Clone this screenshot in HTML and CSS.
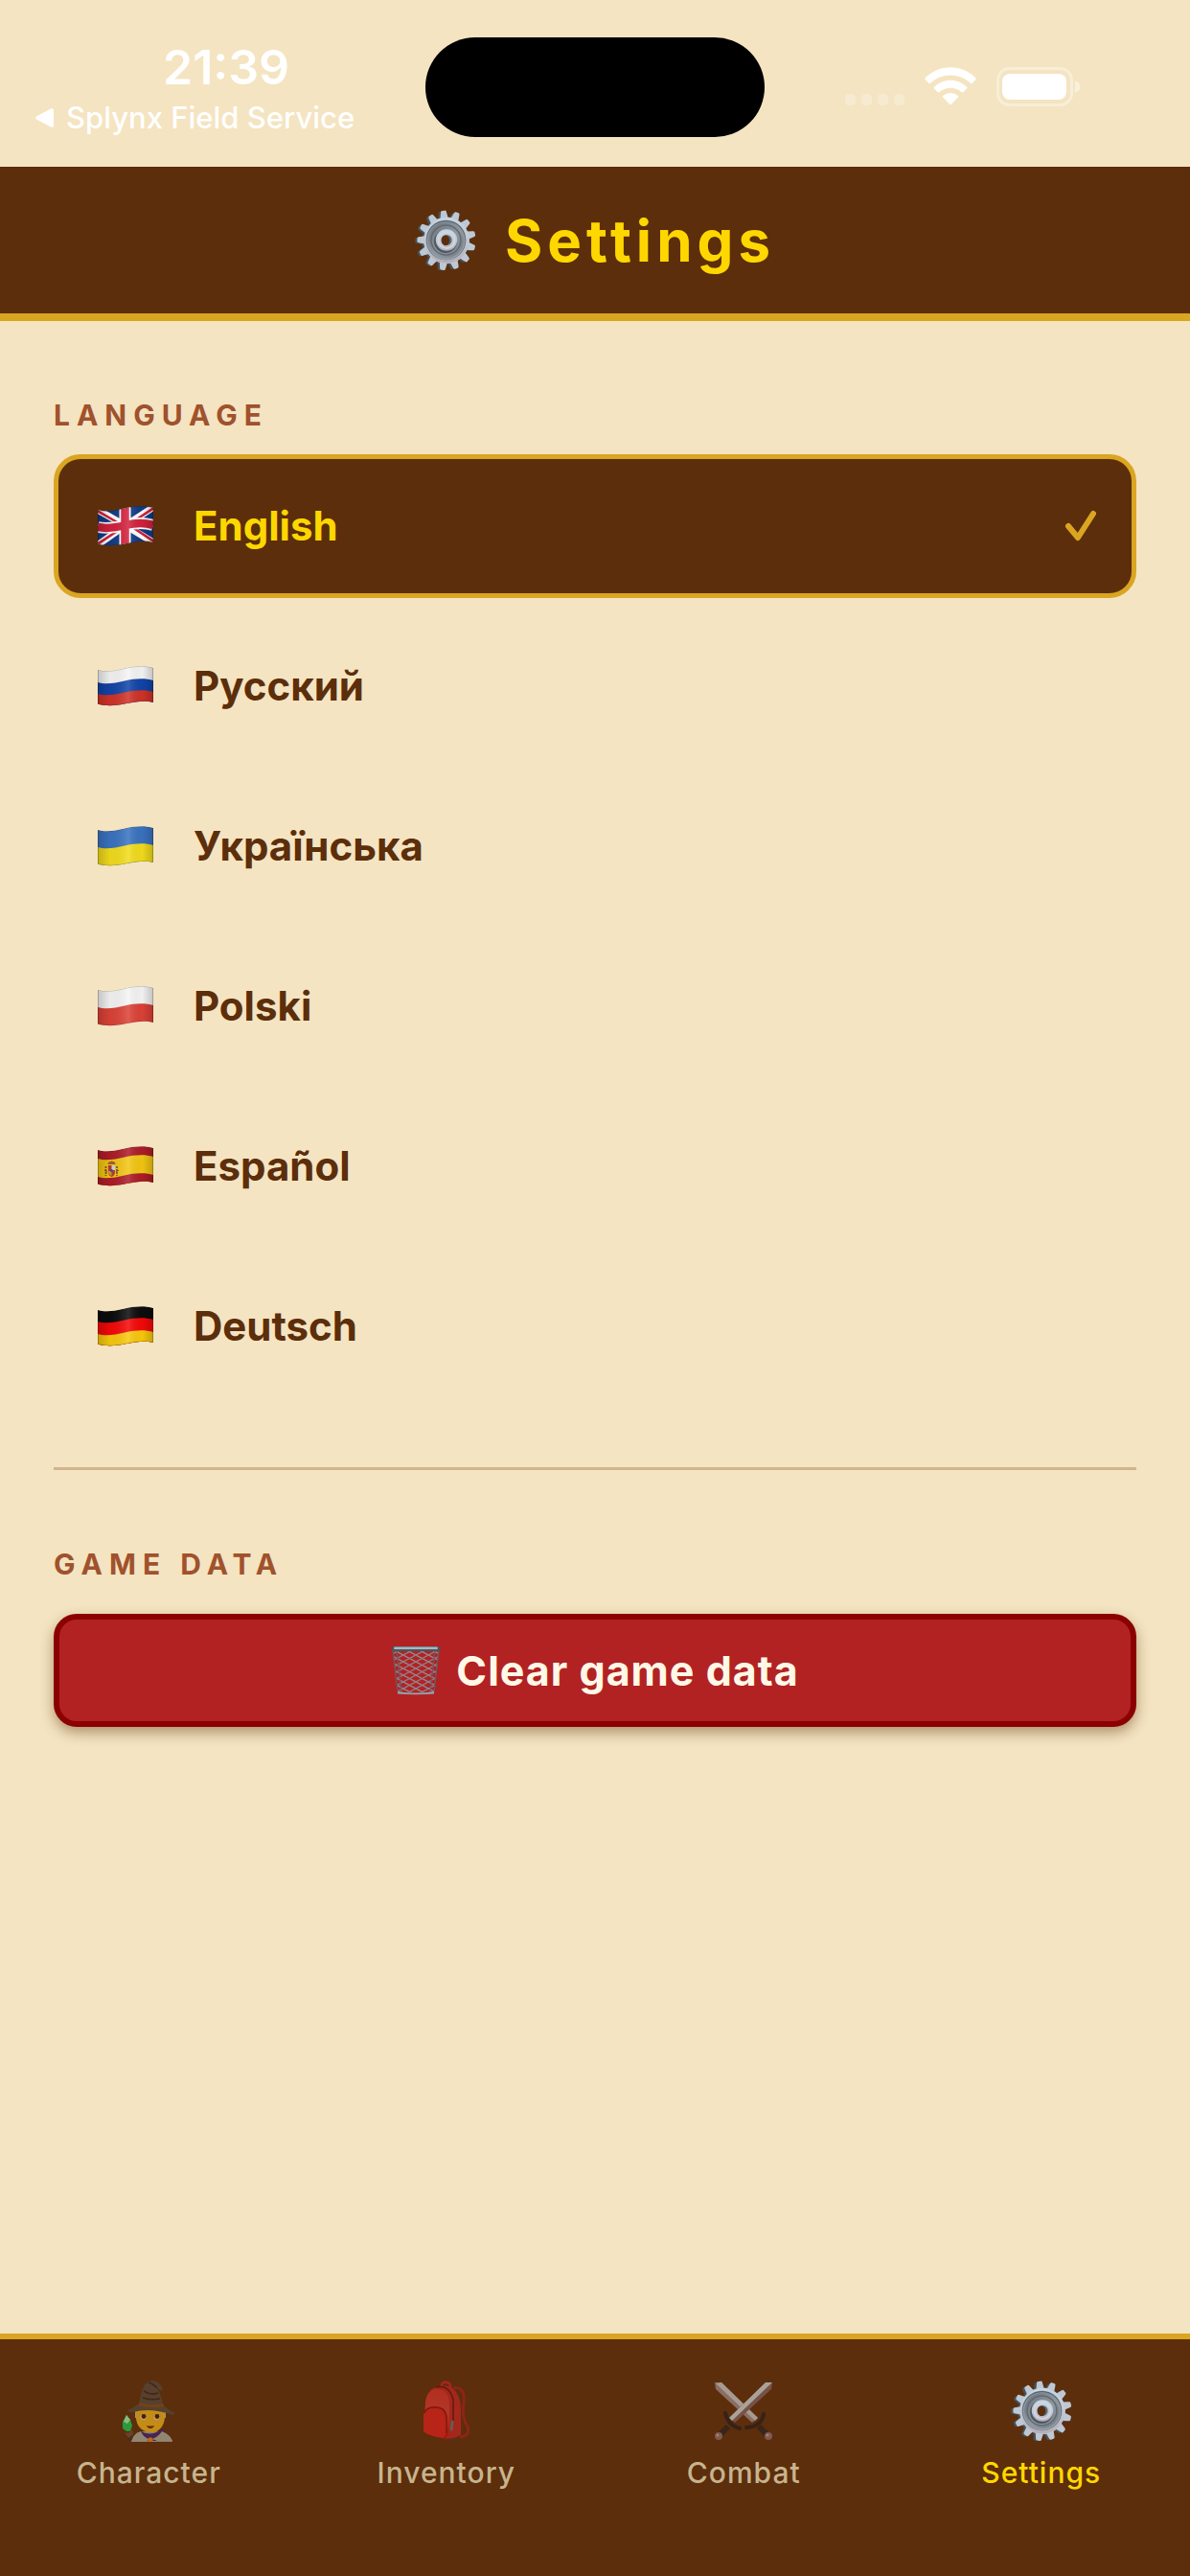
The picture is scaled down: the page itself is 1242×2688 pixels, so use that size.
FILE: index.html
```html
<!DOCTYPE html>
<html lang="en">
<head>
<meta charset="utf-8">
<meta name="viewport" content="width=device-width, initial-scale=1">
<title>Settings</title>
<link rel="stylesheet" href="styles.css">
</head>
<body>
<svg class="defs" width="0" height="0" aria-hidden="true">
  <defs>
    <linearGradient id="shade" x1="0" x2="1" y1="0" y2="0">
      <stop offset="0" stop-color="#000" stop-opacity=".2"/>
      <stop offset=".22" stop-color="#000" stop-opacity=".04"/>
      <stop offset=".55" stop-color="#fff" stop-opacity=".14"/>
      <stop offset=".8" stop-color="#000" stop-opacity=".02"/>
      <stop offset="1" stop-color="#000" stop-opacity=".2"/>
    </linearGradient>
    <clipPath id="flag-clip"><path d="M0 4C8 6.500 18 5 28 2.500C38 0 50-.5 58 2V38C50 35.500 40 37 30 39C20 41.500 8 42 0 39.500Z"/></clipPath>
    <path id="wave" d="M0 4C8 6.500 18 5 28 2.500C38 0 50-.5 58 2V60H0Z"/>
    <g id="flag-finish">
      <rect width="58" height="42" fill="url(#shade)"/>
      <path d="M.5 4C8 6.500 18 5 28 2.500C38 0 50-.5 57.500 2V38C50 35.500 40 37 30 39C20 41.500 8 42 .5 39.500Z" fill="none" stroke="#000" stroke-opacity=".2"/>
    </g>
    <linearGradient id="steel" x1="0" x2="0" y1="0" y2="1">
      <stop offset="0" stop-color="#c5d6e2"/><stop offset=".6" stop-color="#c0c6d0"/><stop offset="1" stop-color="#b7adb8"/>
    </linearGradient>
    <linearGradient id="groove" x1="0" x2="1" y1="0" y2="1">
      <stop offset="0" stop-color="#69727a"/><stop offset=".55" stop-color="#8d979f"/><stop offset="1" stop-color="#737c86"/>
    </linearGradient>
    <path id="tooth" d="M-4.500-22L-3-30Q-2.800-31.500-1.500-31.500H1.500Q2.800-31.500 3-30L4.500-22Z"/>
    <g id="cog">
      <circle r="24.500"/>
      <use href="#tooth" transform="rotate(-6)"/><use href="#tooth" transform="rotate(21.700)"/>
      <use href="#tooth" transform="rotate(49.400)"/><use href="#tooth" transform="rotate(77.100)"/>
      <use href="#tooth" transform="rotate(104.800)"/><use href="#tooth" transform="rotate(132.500)"/>
      <use href="#tooth" transform="rotate(160.200)"/><use href="#tooth" transform="rotate(187.900)"/>
      <use href="#tooth" transform="rotate(215.600)"/><use href="#tooth" transform="rotate(243.300)"/>
      <use href="#tooth" transform="rotate(271)"/><use href="#tooth" transform="rotate(298.700)"/>
      <use href="#tooth" transform="rotate(326.400)"/>
    </g>
    <symbol id="gear" viewBox="0 0 64 64">
      <use href="#cog" transform="translate(30.500 32.500) scale(.96 .98)" fill="#47535b"/>
      <use href="#cog" transform="translate(33 31.800) scale(.97 .99)" fill="#bdc8d4"/>
      <circle cx="33" cy="31.800" r="23.700" fill="url(#steel)"/>
      <circle cx="32.500" cy="31.500" r="20.800" fill="#5e666f"/>
      <circle cx="32.500" cy="32.200" r="20" fill="#929ca4"/>
      <circle cx="32.500" cy="31.500" r="18.600" fill="url(#groove)"/>
      <circle cx="32.500" cy="31.500" r="15.500" fill="none" stroke="#626970" stroke-width="1.500"/>
      <circle cx="32" cy="33" r="12" fill="#4f575f"/>
      <circle cx="33" cy="31.500" r="11.200" fill="url(#steel)"/>
      <circle cx="33" cy="31.500" r="8.500" fill="none" stroke="#ced6e0" stroke-width="2"/>
      <circle cx="33" cy="31.500" r="5.600" fill="#566b79"/>
      <ellipse cx="32" cy="31.800" rx="4.200" ry="5.400" fill="#5c2e0b"/>
    </symbol>
  </defs>
</svg>

<div class="screen">
  <div class="status">
    <div class="status-left">
      <time class="clock">21:39</time>
      <a class="back" href="#"><svg width="21" height="22" viewBox="0 0 21 22" aria-hidden="true"><path d="M2 9.500L17 1.500Q20 .5 20 3V19Q20 21.500 17 20.500L2 12.500Q0 11 2 9.500Z" fill="#fff"/></svg>Splynx Field Service</a>
    </div>
    <div class="island"></div>
    <div class="status-right">
      <svg width="62" height="40" viewBox="0 0 62 40" aria-hidden="true"><g fill="#fff" opacity=".24"><rect y="28" width="11" height="12" rx="4"/><rect x="17" y="28" width="11" height="12" rx="4"/><rect x="34" y="28" width="11" height="12" rx="4"/><rect x="51" y="28" width="11" height="12" rx="4"/></g></svg>
      <svg width="54" height="40" viewBox="0 0 54 40" aria-hidden="true"><path fill="#fff" d="M.6 11.500C15-3.500 39-3.500 53.400 11.500Q54 12.300 53.400 13L49.500 16.900Q48.800 17.500 48.100 16.900C36 5.700 18 5.700 5.900 16.900Q5.200 17.500 4.500 16.900L.6 13Q0 12.300.6 11.500ZM9.800 20.900C19.500 11.400 34.500 11.400 44.200 20.900Q44.800 21.500 44.200 22.200L40.200 26.200Q39.500 26.900 38.800 26.200C32 20.200 22 20.200 15.200 26.200Q14.500 26.900 13.800 26.200L9.800 22.200Q9.200 21.500 9.800 20.900ZM19 30.200C23.500 26 30.500 26 35 30.200Q35.600 30.900 35 31.600L27.700 38.900Q27 39.600 26.300 38.900L19 31.600Q18.400 30.900 19 30.200Z"/></svg>
      <svg width="88" height="42" viewBox="0 0 88 42" aria-hidden="true"><rect x="1.500" y="1.500" width="77" height="38" rx="12" fill="none" stroke="#fff" stroke-opacity=".38" stroke-width="3"/><rect x="6" y="7" width="67" height="27" rx="8" fill="#fff"/><path d="M82 14Q87.500 16 87.500 20.500T82 27Z" fill="#fff" opacity=".45"/></svg>
    </div>
  </div>

  <header class="header">
    <svg class="gear" width="64" height="64" aria-hidden="true"><use href="#gear"/></svg>
    <h1 class="title">Settings</h1>
  </header>

  <main class="content">
    <h2 class="heading" id="language">LANGUAGE</h2>
    <div class="languages" role="radiogroup" aria-labelledby="language">
      <label class="option">
        <input type="radio" name="language" checked>
        <svg class="flag" viewBox="0 0 58 42" aria-hidden="true"><g clip-path="url(#flag-clip)">
          <rect width="58" height="42" fill="#123c88"/>
          <path d="M-2 3L30 21L60 39M-2 42L28 21L60 0" fill="none" stroke="#fff" stroke-width="7"/>
          <path d="M-2 4L22 18M36 22L60 38M-2 41L22 25M36 17L60 1" fill="none" stroke="#d4213c" stroke-width="2.600"/>
          <path d="M0 22C9 24 19 22.500 29 20S49 17 58 20" fill="none" stroke="#fff" stroke-width="12"/>
          <path d="M28.500 0V42" stroke="#fff" stroke-width="12"/>
          <path d="M0 22C9 24 19 22.500 29 20S49 17 58 20M28.500 0V42" fill="none" stroke="#d3203d" stroke-width="8.500"/>
          <use href="#flag-finish"/>
        </g></svg>
        <span class="name">English</span>
        <svg class="check" width="34" height="34" viewBox="0 0 34 34" aria-hidden="true"><path d="M4 17L14 29L30 4" fill="none" stroke="#daa520" stroke-width="6" stroke-linecap="round" stroke-linejoin="round"/></svg>
      </label>
      <label class="option">
        <input type="radio" name="language">
        <svg class="flag" viewBox="0 0 58 42" aria-hidden="true"><g clip-path="url(#flag-clip)"><use href="#wave" fill="#f5f5f5"/><use href="#wave" y="13" fill="#1244a8"/><use href="#wave" y="25" fill="#d03228"/><use href="#flag-finish"/></g></svg>
        <span class="name">Русский</span>
      </label>
      <label class="option">
        <input type="radio" name="language">
        <svg class="flag" viewBox="0 0 58 42" aria-hidden="true"><g clip-path="url(#flag-clip)"><use href="#wave" fill="#3a73c0"/><use href="#wave" y="18" fill="#f3dc1c"/><use href="#flag-finish"/></g></svg>
        <span class="name">Українська</span>
      </label>
      <label class="option">
        <input type="radio" name="language">
        <svg class="flag" viewBox="0 0 58 42" aria-hidden="true"><g clip-path="url(#flag-clip)"><use href="#wave" fill="#f5f5f5"/><use href="#wave" y="18" fill="#dc4236"/><use href="#flag-finish"/></g></svg>
        <span class="name">Polski</span>
      </label>
      <label class="option">
        <input type="radio" name="language">
        <svg class="flag" viewBox="0 0 58 42" aria-hidden="true"><g clip-path="url(#flag-clip)"><use href="#wave" fill="#ad1c28"/><use href="#wave" y="9" fill="#f3c613"/><use href="#wave" y="28" fill="#ad1c28"/>
          <path d="M8.500 21V31M20 21V31" stroke="#785a2c" stroke-width="1.800" stroke-dasharray="2 1"/><path d="M11 20H18V27Q18 31 14.500 32Q11 31 11 27Z" fill="#b83a35"/><path d="M14.500 20H18V25H14.500Z" fill="#d8d4dc"/><path d="M11 26H14.500V31Q11 30 11 26Z" fill="#d99a1c"/><circle cx="14.500" cy="25.500" r="1.500" fill="#31569b"/><path d="M10.500 19Q10 16 14.500 15.500Q19 16 18.500 19Z" fill="#a2652b"/><path d="M7 25L10 27M22 25L19 27" stroke="#a63531"/><use href="#flag-finish"/></g></svg>
        <span class="name">Español</span>
      </label>
      <label class="option">
        <input type="radio" name="language">
        <svg class="flag" viewBox="0 0 58 42" aria-hidden="true"><g clip-path="url(#flag-clip)"><use href="#wave" fill="#0c0c0c"/><use href="#wave" y="12" fill="#f50808"/><use href="#wave" y="25" fill="#f8c90c"/><use href="#flag-finish"/></g></svg>
        <span class="name">Deutsch</span>
      </label>
    </div>

    <hr class="divider">

    <h2 class="heading">GAME DATA</h2>
    <button class="clear" type="button">
      <svg width="52" height="52" viewBox="0 0 52 52" aria-hidden="true">
        <defs><clipPath id="basket"><path d="M2 5H50L45 49H7Z"/></clipPath></defs>
        <g clip-path="url(#basket)" fill="none">
          <path d="M-8 6L60 42M-8 13L60 49M-8 20L60 56M-8 27L60 63M-8 34L60 70M-8 41L60 77M-8-1L60 35M-8-8L60 28M-8-15L60 21M-8-22L60 14" stroke="#9a8791" stroke-width="1.400"/>
          <path d="M60 6L-8 42M60 13L-8 49M60 20L-8 56M60 27L-8 63M60 34L-8 70M60 41L-8 77M60-1L-8 35M60-8L-8 28M60-15L-8 21M60-22L-8 14" stroke="#8d7f89" stroke-width="1.400"/>
          <path d="M6 5L11 49M46 5L41 49" stroke="#79545d" stroke-width="1.400"/>
        </g>
        <path d="M2 5L7 48M50 5L45 48" stroke="#6d5860" stroke-width="1.400"/>
        <path d="M7 48Q26 51 45 48V50.500Q26 52 7 50.500Z" fill="#92a5b2"/>
        <rect x="1" y="1" width="50" height="5" rx="2.500" fill="#4c555a"/>
        <rect x="3" y="1.500" width="46" height="2.500" rx="1.200" fill="#9fb9c6"/>
      </svg>
      <span>Clear game data</span>
    </button>
  </main>

  <nav class="tabs">
    <a class="tab" href="#">
      <svg width="56" height="64" viewBox="0 0 56 64" aria-hidden="true">
        <path d="M6 52Q9 58 8 64" fill="none" stroke="#4f2d1c" stroke-width="4"/>
        <path d="M5 36L1 43V50L5 53H9L11 47L9 41Z" fill="#2b9a3a"/><path d="M5 36L2 43L6 45L9 41Z" fill="#8cb987"/><path d="M3 54Q8 56 11 51L12 56L7 60Z" fill="#69442c"/>
        <path d="M10 64Q13 55 22 53H38Q51 55 53 64Z" fill="#8d8069"/>
        <path d="M19 52Q30 60 43 50L49 59L51 63H13L16 59Z" fill="#4a2450"/>
        <path d="M10 64Q12 55 20 53Q23 60 29 61L25 64ZM53 63Q50 56 42 53Q38 59 32 61L37 63Z" fill="#938671"/>
        <path d="M14 31H46V39H42L40 35H20L18 39H14Z" fill="#9a9482"/>
        <path d="M15 31Q30 27 45 31V39Q43 54 30 54Q17 53 15 40Z" fill="#c58c15"/>
        <path d="M18 36H26Q27 42 23 42T18 36ZM33 36H41Q40 42 36 42T33 36Z" fill="#d3a03b" stroke="#a98745"/>
        <circle cx="23" cy="37.500" r="2.400" fill="#452011"/><circle cx="37" cy="37.500" r="2.400" fill="#452011"/>
        <path d="M26 47Q30 48 34 47Q33 50 30 50T26 47Z" fill="#5d2711"/>
        <path d="M5 32Q13 28 18 24L20 15Q23 1 31 0Q40 0 43 10Q41 11 37 8Q42 17 43 25Q47 30 56 34L53 36Q30 28 12 33Z" fill="#57402d"/>
        <path d="M19 23Q31 27 43 24L44 27Q31 30 17 26Z" fill="#714419"/>
        <path d="M28 2Q34 4 37 8M23 11Q31 16 38 13M22 18Q30 21 40 19" fill="none" stroke="#3f2818" stroke-width="1.500"/>
        <path d="M27 61L30 59L33 61L32 64H28Z" fill="#bd691d"/>
      </svg>
      <span>Character</span>
    </a>
    <a class="tab" href="#">
      <svg width="50" height="64" viewBox="0 0 50 64" aria-hidden="true">
        <defs><linearGradient id="red" x1="0" x2="0" y1="0" y2="1"><stop offset="0" stop-color="#b03020"/><stop offset=".5" stop-color="#b33626"/><stop offset="1" stop-color="#ae1305"/></linearGradient></defs>
        <path d="M32 8Q45 6 43 23T47 48Q50 58 39 59" fill="none" stroke="#8c2517" stroke-width="3"/>
        <path d="M20 8Q19 1 25 2T28 9" fill="none" stroke="#a1271a" stroke-width="3"/>
        <path d="M20 61Q31 66 39 58V50H20Z" fill="#632c19"/>
        <path d="M8 10Q19 3 30 7Q40 14 40 30V57Q30 62 22 60Z" fill="#a3281b"/>
        <path d="M14 7Q28 4 32 20V42" fill="none" stroke="#661711" stroke-width="1.500"/>
        <path d="M1 53L3 23Q4 10 14 9Q28 8 28 27V52Q27 61 21 60Q3 57 1 53Z" fill="url(#red)"/>
        <path d="M1 35Q4 27 15 28Q25 29 25 40V54Q23 61 20 60Q3 57 1 52Z" fill="#b82418"/>
        <path d="M2 34Q4 27 15 28Q25 29 25 40V55" fill="none" stroke="#82180e" stroke-width="1.500"/>
        <path d="M31 43L30 51" stroke="#665b55" stroke-width="3" stroke-linecap="round"/>
      </svg>
      <span>Inventory</span>
    </a>
    <a class="tab" href="#">
      <svg width="60" height="64" viewBox="0 0 60 64" aria-hidden="true">
        <path d="M46 48L56 58" stroke="#392519" stroke-width="6"/>
        <path d="M0 2H7L45 39L39 44L1 9Z" fill="#8b6d62"/><path d="M1 3L7 2L45 39L42 42Z" fill="#a59b91"/>
        <path d="M51 35Q49 48 33 49" fill="none" stroke="#352218" stroke-width="4" stroke-linecap="round"/>
        <path d="M14 48L4 58" stroke="#392519" stroke-width="6"/>
        <path d="M60 2H53L15 39L21 44L59 9Z" fill="#765249"/><path d="M60 2H53L15 39L18 42Z" fill="#aaa298"/>
        <path d="M11 34Q14 47 26 50" fill="none" stroke="#352218" stroke-width="4" stroke-linecap="round"/>
        <circle cx="4" cy="58" r="4" fill="#805951"/><circle cx="56" cy="58" r="4" fill="#805951"/>
        <circle cx="3" cy="57" r="1.500" fill="#a38075"/><circle cx="55" cy="57" r="1.500" fill="#a38075"/>
      </svg>
      <span>Combat</span>
    </a>
    <a class="tab tab-active" href="#" aria-current="page">
      <svg class="gear" width="64" height="64" aria-hidden="true"><use href="#gear"/></svg>
      <span>Settings</span>
    </a>
  </nav>
</div>
</body>
</html>
```
FILE: styles.css
```css
:root {
  --parchment: #f4e4c1;
  --brown: #5c2e0b;
  --gold: #daa520;
  --yellow: #ffd700;
}

* { box-sizing: border-box; }

body {
  margin: 0;
  background: var(--parchment);
  color: var(--brown);
  font-family: Inter, "Noto Sans", sans-serif;
}

svg { display: block; flex: none; }
.defs { position: absolute; }
a { color: inherit; text-decoration: none; }

.screen {
  display: flex;
  flex-direction: column;
  min-height: 100vh;
}

/* Status bar */
.status {
  display: grid;
  grid-template-columns: 1fr 354px 1fr;
  align-items: start;
  padding-bottom: 31px;
  color: #fff;
}
.status-left {
  display: flex;
  flex-direction: column;
  gap: 5px;
  padding: 40px 8px 0 36px;
}
.clock {
  font-size: 50px;
  font-weight: 600;
  line-height: 60px;
  text-align: center;
}
.back {
  display: flex;
  align-items: center;
  gap: 12px;
  font-size: 31px;
  font-weight: 500;
  line-height: 36px;
  white-space: nowrap;
}
.island {
  height: 104px;
  margin-top: 39px;
  border-radius: 52px;
  background: #000;
}
.status-right {
  display: flex;
  gap: 21px;
  padding: 70px 0 0 84px;
}

/* Header */
.header {
  display: flex;
  align-items: center;
  justify-content: center;
  gap: 30px;
  padding: 41px 56px 40px;
  border-bottom: 8px solid var(--gold);
  background: var(--brown);
  color: var(--yellow);
}
.title {
  margin: 0;
  font-size: 60px;
  font-weight: 700;
  line-height: 72px;
  letter-spacing: 5px;
}

/* Content */
.content {
  flex: 1;
  padding: 80px 56px;
}
.heading {
  margin: 0 0 23px;
  color: #a0522d;
  font-size: 30px;
  font-weight: 700;
  line-height: 36px;
  letter-spacing: 7px;
}
.languages {
  display: flex;
  flex-direction: column;
  gap: 17px;
}
.option {
  display: flex;
  align-items: center;
  padding: 44px 36px 44px 41px;
  border: 5px solid transparent;
  border-radius: 28px;
  cursor: pointer;
}
.option:has(input:checked) {
  border-color: var(--gold);
  background: var(--brown);
  color: var(--yellow);
}
.option input {
  position: absolute;
  opacity: 0;
}
.flag {
  width: 58px;
  height: 42px;
}
.name {
  flex: 1;
  margin-left: 42px;
  font-size: 42px;
  font-weight: 700;
  line-height: 52px;
}
.divider {
  height: 3px;
  margin: 72px 0 80px;
  border: 0;
  background: #d2b48c;
}
.clear {
  display: flex;
  align-items: center;
  justify-content: center;
  gap: 16px;
  width: 100%;
  margin-top: 34px;
  padding: 27px 24px;
  border: 6px solid #8b0000;
  border-radius: 24px;
  background: #b22222;
  box-shadow: 0 6px 14px rgba(92, 46, 11, 0.45);
  color: #fff8e7;
  font-family: inherit;
  font-size: 43px;
  font-weight: 700;
  line-height: 52px;
  letter-spacing: 1px;
}

/* Tab bar */
.tabs {
  display: grid;
  grid-template-columns: repeat(4, 1fr);
  padding: 43px 0 90px;
  border-top: 6px solid var(--gold);
  background: var(--brown);
}
.tab {
  display: flex;
  flex-direction: column;
  align-items: center;
  gap: 14px;
  color: #c7b48f;
  font-size: 30px;
  font-weight: 500;
  line-height: 36px;
  letter-spacing: 1px;
}
.tab-active { color: var(--yellow); }
```
